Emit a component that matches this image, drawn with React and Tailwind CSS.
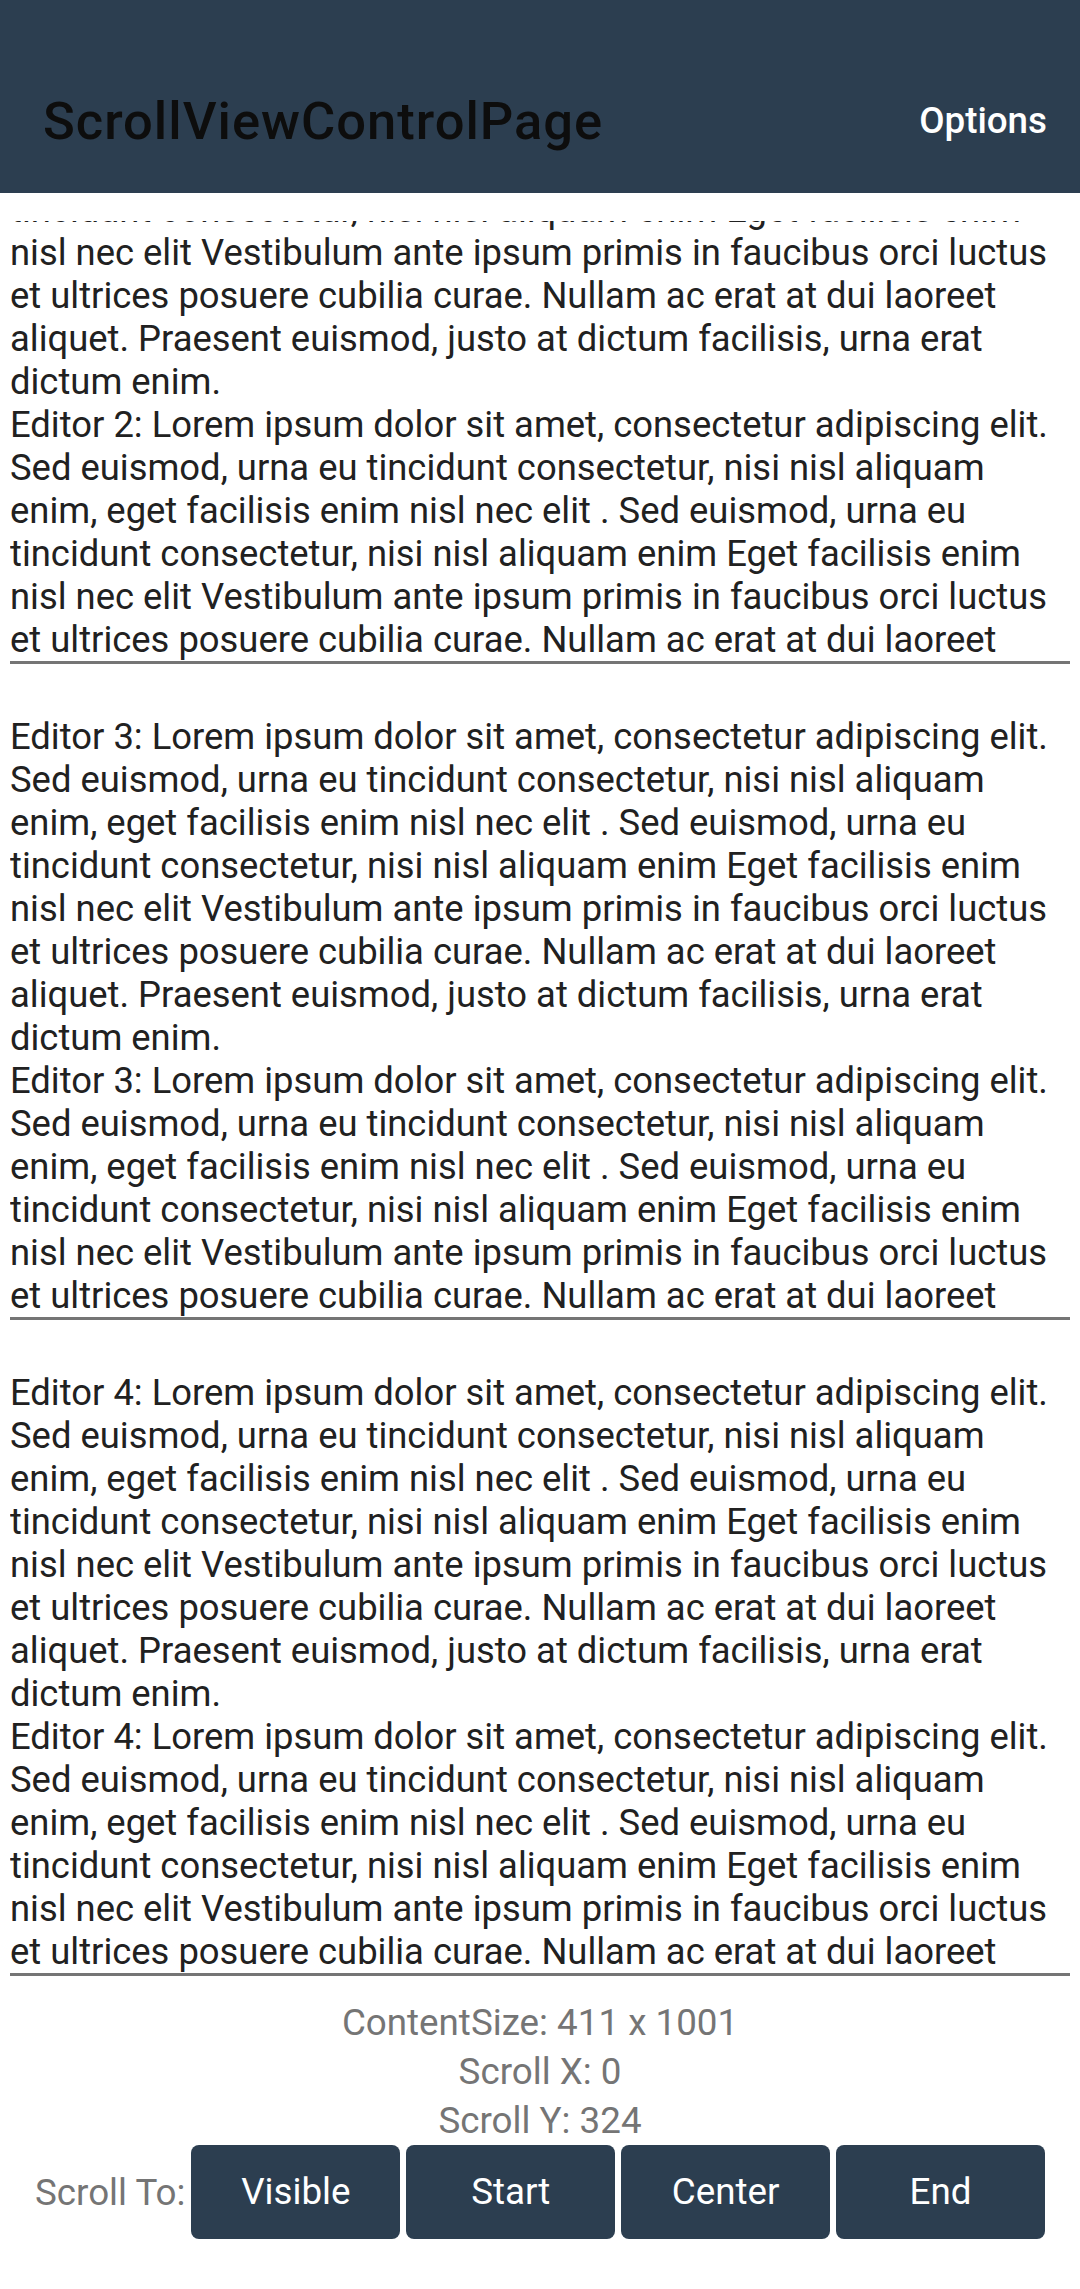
import React from "react";

const paragraph = (n) => [
  `Editor ${n}: Lorem ipsum dolor sit amet, consectetur adipiscing elit.`,
  "Sed euismod, urna eu tincidunt consectetur, nisi nisl aliquam",
  "enim, eget facilisis enim nisl nec elit . Sed euismod, urna eu",
  "tincidunt consectetur, nisi nisl aliquam enim Eget facilisis enim",
  "nisl nec elit Vestibulum ante ipsum primis in faucibus orci luctus",
  "et ultrices posuere cubilia curae. Nullam ac erat at dui laoreet",
  "aliquet. Praesent euismod, justo at dictum facilisis, urna erat",
  "dictum enim.",
];

// 14 visible lines per editor
const editorLines = (n) => [...paragraph(n), ...paragraph(n)].slice(0, 14);

const Editor = ({ n, from = 0 }) => {
  const lines = editorLines(n).slice(from);
  return (
    <div className="mx-[10px] shrink-0 pt-[51px]">
      <div
        className="flex flex-col justify-end overflow-hidden text-[36.4px] leading-[43px] text-[#212121]"
        style={{ height: lines.length * 43 }}
      >
        {lines.map((line, i) => (
          <div key={i} className="whitespace-nowrap">
            {line}
          </div>
        ))}
      </div>
      <div className="h-[3px] bg-[#757575]" />
    </div>
  );
};

const App = () => {
  const buttons = ["Visible", "Start", "Center", "End"];

  return (
    <div
      className="min-h-[2289px] bg-white"
      style={{ fontFamily: "Roboto, 'Noto Sans', sans-serif" }}
    >
      <header className="h-[193px] bg-[#2c3e50] pt-[46px]">
        <div className="flex h-[147px] items-center justify-between pl-[43px] pr-[33px] pt-[3px]">
          <h1 className="text-[52.5px] font-medium tracking-[1px] text-[#0d0d0d]">
            ScrollViewControlPage
          </h1>
          <span className="text-[36.75px] font-medium text-white">
            Options
          </span>
        </div>
      </header>

      {/* scrolled viewport: editor 2 is only partly visible */}
      <div className="mt-[28px]">
        <div className="flex h-[443px] flex-col justify-end overflow-hidden">
          <Editor n={2} from={3} />
        </div>
        <Editor n={3} />
        <Editor n={4} />
      </div>

      <div className="mt-[25px] flex flex-col items-center gap-[6px] text-[36.75px] leading-[43px] text-[#757575]">
        <p>ContentSize: 411 x 1001</p>
        <p>Scroll X: 0</p>
        <p>Scroll Y: 324</p>
      </div>

      <div className="mt-[3px] flex items-center gap-[6px] px-[35px]">
        <span className="text-[36.75px] leading-[43px] text-[#757575]">
          Scroll To:
        </span>
        {buttons.map((label) => (
          <button
            key={label}
            type="button"
            className="h-[94px] flex-1 rounded-[8px] bg-[#2c3e50] text-[36.75px] text-white"
          >
            {label}
          </button>
        ))}
      </div>
    </div>
  );
};

export default App;
